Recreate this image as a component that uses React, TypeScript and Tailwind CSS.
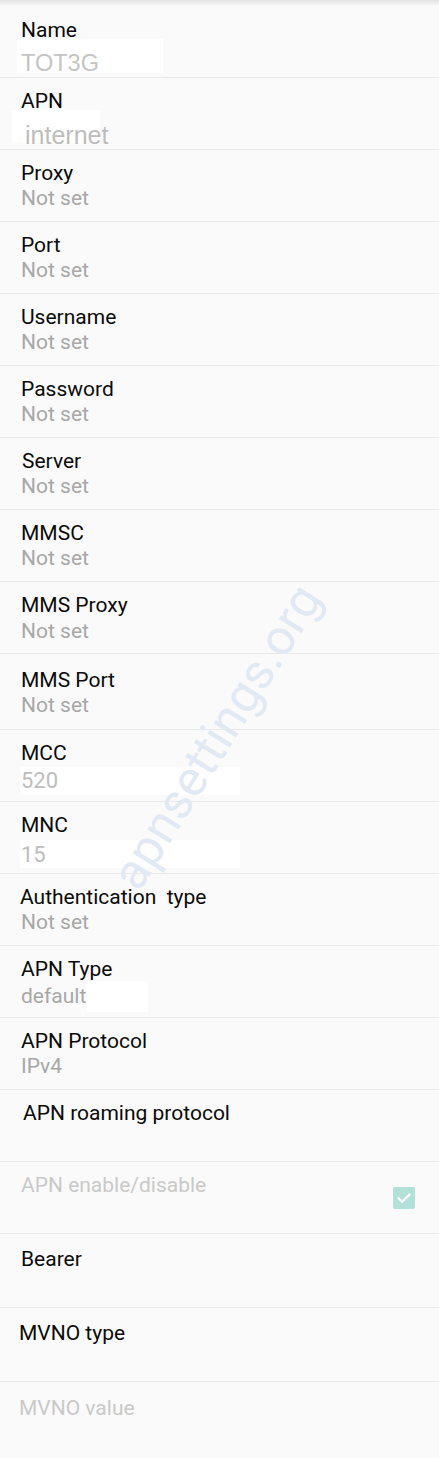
import React from "react";

type RowProps = {
  rowCls: string;
  title: string;
  value?: string;
  titleCls?: string;
  valueCls?: string;
  disabled?: boolean;
  maskCls?: string;
  checkbox?: boolean;
};

function Row({
  rowCls,
  title,
  value,
  titleCls = "pt-[11px] pl-[21px]",
  valueCls = "text-[21px] text-[#a7a7a7]",
  disabled,
  maskCls,
  checkbox,
}: RowProps) {
  return (
    <div className={`relative flex items-start justify-between ${rowCls}`}>
      {maskCls && <div className={`absolute bg-white ${maskCls}`} />}
      <div className={`relative flex flex-col ${titleCls}`}>
        <div
          className={`whitespace-pre text-[21px] leading-[25px] ${disabled ? "text-[#c9c9c9]" : "text-[#0a0a0a]"}`}
        >
          {title}
        </div>
        {value && <div className={`leading-[25px] ${valueCls}`}>{value}</div>}
      </div>
      {checkbox && (
        <div className="mr-[24px] flex h-[22px] w-[22px] items-center justify-center self-center rounded-[2px] bg-[#b4e0da]">
          <svg width="16" height="16" viewBox="0 0 16 16" fill="none">
            <path
              d="M2.5 8.2 L6.2 11.8 L13.5 4.5"
              stroke="white"
              strokeWidth="2.2"
              strokeLinecap="round"
              strokeLinejoin="round"
            />
          </svg>
        </div>
      )}
    </div>
  );
}

const line = "border-b border-[#e9e9e9]";

export default function App() {
  return (
    <div className="relative h-[1458px] w-[439px] overflow-hidden bg-[#fafafa] font-['Roboto','Noto_Sans',sans-serif]">
      <div className="h-[6px] bg-gradient-to-b from-[#e3e3e3] to-[#fafafa]" />
      <Row
        rowCls={`h-[72px] ${line}`}
        title="Name"
        value="TOT3G"
        titleCls="pt-[12px] pl-[21px]"
        valueCls="mt-[8px] font-['Liberation_Sans',Arial,sans-serif] text-[23.5px] text-[#c4c4c4]"
        maskCls="left-[17px] top-[33px] h-[34px] w-[146px]"
      />
      <Row
        rowCls={`h-[72px] ${line}`}
        title="APN"
        value="internet"
        valueCls="mt-[9px] ml-[4px] font-['Liberation_Sans',Arial,sans-serif] text-[25px] text-[#bdbdbd]"
        maskCls="left-[12px] top-[32px] h-[33px] w-[88px]"
      />
      <Row rowCls={`h-[72px] ${line}`} title="Proxy" value="Not set" />
      <Row rowCls={`h-[72px] ${line}`} title="Port" value="Not set" />
      <Row rowCls={`h-[72px] ${line}`} title="Username" value="Not set" />
      <Row rowCls={`h-[72px] ${line}`} title="Password" value="Not set" />
      <Row
        rowCls={`h-[72px] ${line}`}
        title="Server"
        value="Not set"
        titleCls="pt-[11px] pl-[22px]"
        valueCls="-ml-[1px] text-[21px] text-[#a7a7a7]"
      />
      <Row rowCls={`h-[72px] ${line}`} title="MMSC" value="Not set" />
      <Row
        rowCls={`h-[72px] ${line}`}
        title="MMS Proxy"
        value="Not set"
        valueCls="mt-[1px] text-[21px] text-[#a7a7a7]"
      />
      <Row rowCls={`h-[76px] ${line}`} title="MMS Port" value="Not set" titleCls="pt-[14px] pl-[21px]" />
      <Row
        rowCls={`h-[72px] ${line}`}
        title="MCC"
        value="520"
        valueCls="mt-[2px] text-[22px] text-[#bdbdbd]"
        maskCls="left-[20px] top-[37px] h-[28px] w-[220px]"
      />
      <Row
        rowCls={`h-[72px] ${line}`}
        title="MNC"
        value="15"
        valueCls="mt-[4px] text-[22px] text-[#bdbdbd]"
        maskCls="left-[20px] top-[38px] h-[28px] w-[220px]"
      />
      <Row
        rowCls={`h-[72px] ${line}`}
        title="Authentication  type"
        value="Not set"
        titleCls="pt-[11px] pl-[20px]"
        valueCls="ml-[1px] text-[21px] text-[#a7a7a7]"
      />
      <Row
        rowCls={`h-[72px] ${line}`}
        title="APN Type"
        value="default"
        valueCls="mt-[2px] text-[21px] text-[#a7a7a7]"
        maskCls="left-[87px] top-[35px] h-[31px] w-[61px]"
      />
      <Row rowCls={`h-[72px] ${line}`} title="APN Protocol" value="IPv4" />
      <Row rowCls={`h-[72px] ${line}`} title="APN roaming protocol" titleCls="pt-[11px] pl-[23px]" />
      <Row rowCls={`h-[72px] ${line}`} title="APN enable/disable" disabled checkbox />
      <Row rowCls={`h-[74px] ${line}`} title="Bearer" titleCls="pt-[13px] pl-[21px]" />
      <Row rowCls={`h-[74px] ${line}`} title="MVNO type" titleCls="pt-[13px] pl-[19px]" />
      <Row rowCls="h-[76px]" title="MVNO value" titleCls="pt-[14px] pl-[19px]" disabled />
      <div className="pointer-events-none absolute left-[217px] top-[737px] -translate-x-1/2 -translate-y-1/2 -rotate-[58deg] whitespace-nowrap font-['Roboto',sans-serif] text-[50px] text-[#e1e9f4]">
        apnsettings.org
      </div>
    </div>
  );
}
